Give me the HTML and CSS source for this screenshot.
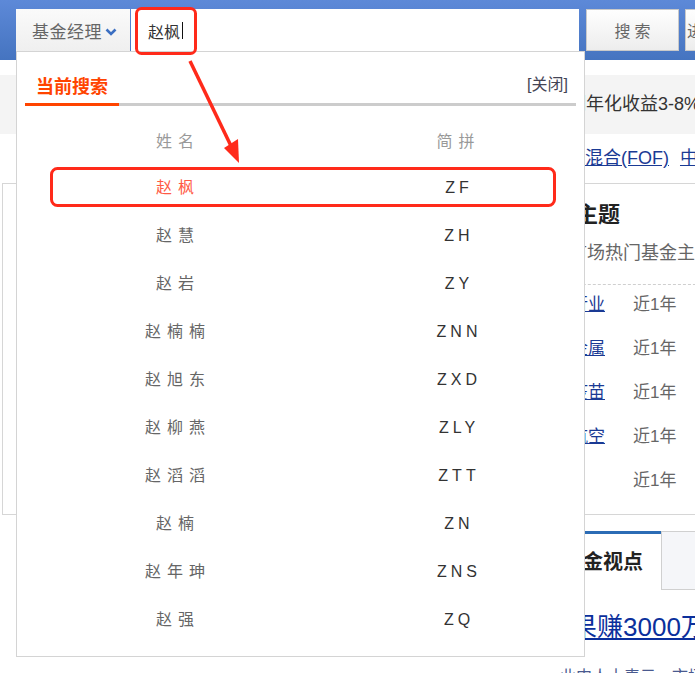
FILE: index.html
```html
<!DOCTYPE html>
<html lang="zh-CN">
<head>
<meta charset="utf-8">
<title>基金经理搜索</title>
<link rel="stylesheet" href="styles.css">
</head>
<body>
<div class="page">
  <header class="top">
    <div class="sel"><span class="sel-text">基金经理</span><svg class="chev" width="12" height="8" viewBox="0 0 12 8"><polyline points="1.5,1.5 6,6 10.5,1.5" fill="none" stroke="#3b6fc2" stroke-width="2.6"/></svg></div>
    <div class="inp"><span class="typed">赵枫</span><span class="caret"></span></div>
    <button class="btn">搜索</button>
    <button class="btn btn-more">进入</button>
  </header>

  <div class="band"><span class="band-text">期年化收益3-8%</span></div>

  <div class="links"><a class="lnk">混合(FOF)</a><a class="lnk lnk2">中证500</a></div>

  <section class="box">
    <div class="theme">
      <h3 class="theme-title">热门主题</h3>
      <p class="theme-sub">市场热门基金主题</p>
      <div class="theme-list">
        <div class="trow"><a class="tname">消费行业</a><span class="tper">近1年</span></div>
        <div class="trow"><a class="tname">有色金属</a><span class="tper">近1年</span></div>
        <div class="trow"><a class="tname">新冠疫苗</a><span class="tper">近1年</span></div>
        <div class="trow"><a class="tname">航空航空</a><span class="tper">近1年</span></div>
        <div class="trow"><span class="tname"></span><span class="tper">近1年</span></div>
      </div>
    </div>
  </section>

  <section class="views">
    <div class="tabs">
      <div class="vtab active">基金视点</div>
      <div class="vtab">热点</div>
    </div>
    <a class="headline">结果赚3000万</a>
    <p class="vtext">业内人士表示，市场仍存在结构性机会</p>
  </section>

  <div class="dropdown">
    <div class="tabbar">
      <span class="dtab">当前搜索</span>
      <a class="close">[关闭]</a>
    </div>
    <div class="table">
      <div class="tr head"><span class="c1">姓名</span><span class="c2">简拼</span></div>
      <div class="tr"><span class="c1 hit">赵枫</span><span class="c2 code">ZF</span></div>
      <div class="tr"><span class="c1">赵慧</span><span class="c2 code">ZH</span></div>
      <div class="tr"><span class="c1">赵岩</span><span class="c2 code">ZY</span></div>
      <div class="tr"><span class="c1">赵楠楠</span><span class="c2 code">ZNN</span></div>
      <div class="tr"><span class="c1">赵旭东</span><span class="c2 code">ZXD</span></div>
      <div class="tr"><span class="c1">赵柳燕</span><span class="c2 code">ZLY</span></div>
      <div class="tr"><span class="c1">赵滔滔</span><span class="c2 code">ZTT</span></div>
      <div class="tr"><span class="c1">赵楠</span><span class="c2 code">ZN</span></div>
      <div class="tr"><span class="c1">赵年珅</span><span class="c2 code">ZNS</span></div>
      <div class="tr"><span class="c1">赵强</span><span class="c2 code">ZQ</span></div>
    </div>
  </div>

  <svg class="annot" width="695" height="673" viewBox="0 0 695 673">
    <rect x="136.5" y="8.5" width="59" height="45" rx="5" fill="none" stroke="#ff2a1a" stroke-width="3"/>
    <rect x="51.5" y="168.5" width="503" height="37" rx="6" fill="none" stroke="#ff2a1a" stroke-width="3"/>
    <line x1="190" y1="61" x2="232" y2="148" stroke="#ff2a1a" stroke-width="3.5"/>
    <polygon points="238,139 224,148 239,163" fill="#ff2a1a"/>
  </svg>
</div>
</body>
</html>
```

FILE: styles.css
```css
html, body {
  margin: 0;
  padding: 0;
}
body {
  width: 695px;
  height: 673px;
  overflow: hidden;
  background: #fff;
  font-family: "Liberation Sans", "Noto Sans CJK SC", sans-serif;
  font-size: 16px;
  color: #333;
}
.page {
  position: relative;
  width: 695px;
  height: 673px;
  overflow: hidden;
}

/* header */
.top {
  height: 60px;
  box-sizing: border-box;
  padding: 9px 0 0 16px;
  display: flex;
  align-items: flex-start;
  background: linear-gradient(#5d89d8, #4574c0);
  white-space: nowrap;
}
.top > * {
  flex: none;
}
.sel {
  width: 114px;
  height: 43px;
  box-sizing: border-box;
  padding-left: 16px;
  display: flex;
  align-items: center;
  background: linear-gradient(#fafafa, #efefef);
  color: #666;
  font-size: 17px;
  letter-spacing: 0.5px;
}
.chev {
  margin-left: 3px;
  margin-top: 2px;
}
.inp {
  margin-left: 1px;
  width: 448px;
  height: 43px;
  box-sizing: border-box;
  padding-left: 17px;
  background: #fff;
  display: flex;
  align-items: center;
}
.typed {
  font-size: 16px;
  color: #333;
}
.caret {
  display: inline-block;
  width: 1px;
  height: 17px;
  margin-left: 2px;
  background: #111;
}
.btn {
  margin: 0 0 0 7px;
  width: 93px;
  height: 42px;
  box-sizing: border-box;
  border: 1px solid #c9c9c9;
  background: linear-gradient(#fefefe, #ededed);
  font-family: inherit;
  font-size: 16px;
  color: #666;
  letter-spacing: 4px;
  padding: 0 0 0 4px;
}
.btn + .btn {
  margin-left: 6px;
}
.btn-more {
  text-align: left;
  padding-left: 1px;
}

/* background content */
.band {
  margin-top: 15px;
  height: 59px;
  line-height: 59px;
  background: #f4f4f4;
  white-space: nowrap;
}
.band-text {
  padding-left: 568px;
  font-size: 18px;
  color: #333;
}
.links {
  height: 49px;
  line-height: 49px;
  padding-left: 585px;
  white-space: nowrap;
  font-size: 18px;
}
.lnk {
  color: #1a3a94;
  text-decoration: underline;
}
.lnk2 {
  margin-left: 11px;
}
.box {
  margin-left: 2px;
  width: 720px;
  height: 332px;
  box-sizing: border-box;
  border: 1px solid #d6d6d6;
}
.theme {
  padding-left: 529px;
  white-space: nowrap;
}
.theme-title {
  margin: 16px 0 0;
  font-size: 22px;
  line-height: 30px;
  font-weight: bold;
  color: #222;
}
.theme-sub {
  margin: 8px 0 0 37px;
  font-size: 18px;
  line-height: 30px;
  color: #666;
}
.theme-list {
  margin: 16px 0 0 -500px;
  border-top: 1px dashed #cfcfcf;
}
.trow {
  height: 44px;
  box-sizing: border-box;
  padding: 0 0 4px 473px;
  line-height: 40px;
  display: grid;
  grid-template-columns: 100px auto;
  column-gap: 28px;
  font-size: 17px;
}
.tname {
  text-align: right;
  color: #1a3a94;
  text-decoration: underline;
}
.tper {
  color: #666;
}
.views {
  margin-top: 16px;
  padding-left: 540px;
  white-space: nowrap;
}
.tabs {
  display: flex;
  height: 59px;
}
.vtab {
  width: 121px;
  flex: none;
  box-sizing: border-box;
  padding-left: 23px;
  line-height: 56px;
  font-size: 20px;
  font-weight: bold;
  color: #222;
  border-top: 3px solid #2b6cb5;
}
.vtab + .vtab {
  width: 100px;
  padding-left: 40px;
  border-top: 1px solid #d0d0d0;
  border-left: 1px solid #d0d0d0;
  border-bottom: 1px solid #d0d0d0;
  background: #f5f6f9;
  color: #444;
  line-height: 57px;
}
.headline {
  display: block;
  margin-top: 17px;
  padding-left: 5px;
  font-size: 26px;
  line-height: 40px;
  color: #0b2f9c;
  text-decoration: underline;
}
.vtext {
  margin: 18px 0 0 20px;
  font-size: 16px;
  line-height: 24px;
  color: #4a5a8f;
}

/* dropdown */
.dropdown {
  position: absolute;
  left: 16px;
  top: 51px;
  width: 569px;
  height: 606px;
  box-sizing: border-box;
  border: 1px solid #d4d4d4;
  background: #fff;
  z-index: 2;
}
.tabbar {
  margin: 20px 8px 0;
  display: flex;
  justify-content: space-between;
  align-items: flex-end;
  border-bottom: 3px solid #cccccc;
}
.dtab {
  padding: 0 11px 3px;
  line-height: 26px;
  margin-bottom: -3px;
  border-bottom: 3px solid #ff4400;
  color: #ff4400;
  font-size: 18px;
  font-weight: bold;
}
.close {
  padding: 0 8px 5px 0;
  line-height: 26px;
  font-size: 16px;
  color: #445;
}
.table {
  margin-top: 13px;
}
.tr {
  display: grid;
  grid-template-columns: 322px 239px;
  height: 48px;
  line-height: 48px;
  text-align: center;
  letter-spacing: 6px;
  font-size: 16px;
}
.tr.head {
  height: 45px;
  line-height: 45px;
}
.c1 {
  color: #666;
}
.c2 {
  color: #333;
}
.c2.code {
  letter-spacing: 4px;
  padding-left: 1px;
}
.head .c1, .head .c2 {
  color: #999;
}
.c1.hit {
  color: #ff5a45;
}
.annot {
  position: absolute;
  left: 0;
  top: 0;
  z-index: 3;
  pointer-events: none;
}
```
